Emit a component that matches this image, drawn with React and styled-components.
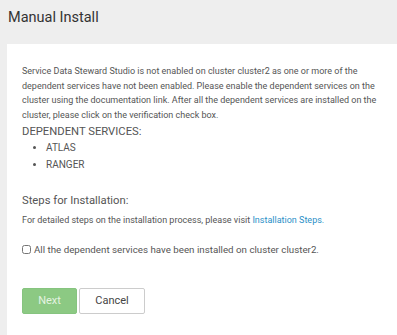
import styled, { createGlobalStyle } from "styled-components";

const GlobalStyle = createGlobalStyle`
  html, body {
    margin: 0;
    padding: 0;
    background: #eeeeee;
    font-family: Roboto, "Liberation Sans", sans-serif;
  }
`;

export default function App() {
  return (
    <>
      <GlobalStyle />
      <Page>
        <Header>Manual Install</Header>
        <Panel>
          <Message>
            Service Data Steward Studio is not enabled on cluster cluster2 as one or more of the
            dependent services have not been enabled. Please enable the dependent services on the
            cluster using the documentation link. After all the dependent services are installed on
            the cluster, please click on the verification check box.
          </Message>
          <SectionTitle>DEPENDENT SERVICES:</SectionTitle>
          <ServiceList>
            <li>ATLAS</li>
            <li>RANGER</li>
          </ServiceList>
          <StepsTitle>Steps for Installation:</StepsTitle>
          <StepsText>
            For detailed steps on the installation process, please visit{" "}
            <Link href="#">Installation Steps.</Link>
          </StepsText>
          <CheckRow>
            <input type="checkbox" />
            <span>All the dependent services have been installed on cluster cluster2.</span>
          </CheckRow>
          <Actions>
            <Button variant="primary" disabled>Next</Button>
            <Button>Cancel</Button>
          </Actions>
        </Panel>
      </Page>
    </>
  );
}

const Page = styled.div`
  display: flex;
  flex-direction: column;
  min-height: 100vh;
`;

const Header = styled.h1`
  margin: 0;
  height: 44px;
  padding: 9px 8px 0;
  box-sizing: border-box;
  font-size: 14.5px;
  font-weight: 400;
  line-height: 18px;
  color: #333333;
`;

const Panel = styled.div`
  flex: 1;
  margin-left: 7px;
  background: #ffffff;
  padding: 20px 15px 20px;
`;

const Message = styled.p`
  margin: 0;
  font-size: 9px;
  line-height: 14.7px;
  color: #555555;
`;

const SectionTitle = styled.div`
  margin-top: 1px;
  font-size: 11.25px;
  line-height: 15px;
  color: #555555;
`;

const ServiceList = styled.ul`
  margin: 0;
  padding-left: 24px;
  font-size: 10px;
  line-height: 17px;
  color: #555555;
`;

const StepsTitle = styled.div`
  margin-top: 20px;
  font-size: 11.25px;
  line-height: 15px;
  color: #555555;
`;

const StepsText = styled.p`
  margin: 5px 0 0;
  font-size: 9px;
  line-height: 15px;
  color: #555555;
`;

const Link = styled.a`
  color: #2a8fc7;
  text-decoration: none;
`;

const CheckRow = styled.label`
  margin-top: 14px;
  display: flex;
  align-items: center;
  gap: 3px;
  font-size: 9.75px;
  line-height: 15px;
  color: #555555;
  input {
    margin: 0;
    width: 9px;
    height: 9px;
  }
`;

const Actions = styled.div`
  margin-top: 31px;
  display: flex;
  gap: 2px;
`;

const Button = styled.button`
  height: 26px;
  padding: 0;
  width: ${(p) => (p.variant === "primary" ? "55px" : "66px")};
  border: 1px solid ${(p) => (p.variant === "primary" ? "#86c47f" : "#cccccc")};
  border-radius: 2px;
  background: ${(p) => (p.variant === "primary" ? "#8cc983" : "#ffffff")};
  color: ${(p) => (p.variant === "primary" ? "#e4f3e1" : "#444444")};
  font-family: Roboto, "Liberation Sans", sans-serif;
  font-size: 11px;
  cursor: pointer;
`;
